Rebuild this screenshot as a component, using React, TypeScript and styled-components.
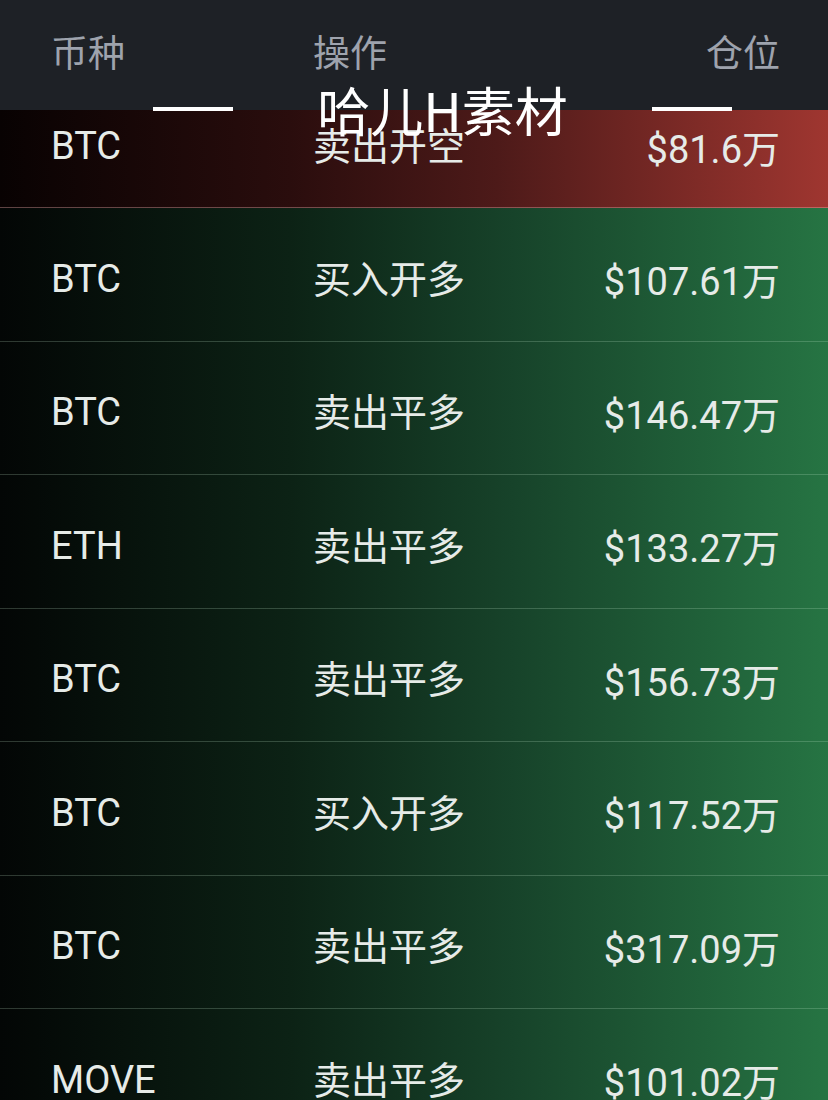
import styled, { createGlobalStyle } from "styled-components";

const GlobalStyle = createGlobalStyle`
  html, body {
    margin: 0;
    padding: 0;
    background: #050806;
  }
  body {
    font-family: Roboto, "Noto Sans CJK SC", sans-serif;
  }
`

const Page = styled.div`
  position: relative;
  width: 828px;
  height: 1100px;
  overflow: hidden;
  background: #050806;
`

const Header = styled.div`
  display: grid;
  grid-template-columns: 262px 1fr auto;
  align-items: center;
  height: 110px;
  padding: 0 48px 8px 51px;
  box-sizing: border-box;
  background: #1e2126;
  color: #9ea3ad;
  font-size: 37px;
`

const Right = styled.div`
  text-align: right;
`

// latin glyphs sit a bit high next to the CJK ones
const Latin = styled.div<{ $right?: boolean }>`
  padding-top: 3px;
  text-align: ${(p) => (p.$right ? "right" : "left")};
`

const Action = styled.div`
  margin-top: -2px;
`

const Row = styled.div<{ $tone: "red" | "green"; $clipped?: boolean }>`
  display: grid;
  grid-template-columns: 262px 1fr auto;
  align-items: center;
  height: ${(p) => (p.$clipped ? "98px" : "133.5px")};
  padding: 0 48px 0 51px;
  padding-bottom: ${(p) => (p.$clipped ? "28px" : "0")};
  padding-top: ${(p) => (p.$clipped ? "0" : "6px")};
  box-sizing: border-box;
  color: #e6ebe8;
  font-size: 38px;
  border-bottom: 1px solid ${(p) => (p.$tone === "red" ? "rgba(255,190,190,0.35)" : "rgba(200,235,210,0.22)")};
  background: ${(p) =>
    p.$tone === "red"
      ? "linear-gradient(90deg, #080202 0%, #2a0d0d 35%, #4d1a19 60%, #9f3630 100%)"
      : "linear-gradient(90deg, #030605 0%, #0c2215 35%, #17432a 62%, #267443 100%)"};
`

const Watermark = styled.div`
  position: absolute;
  top: 78px;
  left: 153px;
  width: 579px;
  display: flex;
  align-items: center;
  justify-content: space-between;
  color: #ffffff;
  font-family: "Noto Sans CJK SC", sans-serif;
  font-size: 53px;
  line-height: 62px;
`

const Dash = styled.span`
  display: block;
  width: 80px;
  height: 4px;
  margin-top: 0;
  background: #ffffff;
`

type Trade = { coin: string; action: string; size: string; tone: "red" | "green" }

const trades: Trade[] = [
  { coin: "BTC", action: "卖出开空", size: "$81.6万", tone: "red" },
  { coin: "BTC", action: "买入开多", size: "$107.61万", tone: "green" },
  { coin: "BTC", action: "卖出平多", size: "$146.47万", tone: "green" },
  { coin: "ETH", action: "卖出平多", size: "$133.27万", tone: "green" },
  { coin: "BTC", action: "卖出平多", size: "$156.73万", tone: "green" },
  { coin: "BTC", action: "买入开多", size: "$117.52万", tone: "green" },
  { coin: "BTC", action: "卖出平多", size: "$317.09万", tone: "green" },
  { coin: "MOVE", action: "卖出平多", size: "$101.02万", tone: "green" },
]

const App = () => {
  return (
    <Page>
      <GlobalStyle />
      <Header>
        <div>币种</div>
        <div>操作</div>
        <Right>仓位</Right>
      </Header>
      {trades.map((t, i) => (
        <Row key={i} $tone={t.tone} $clipped={i === 0}>
          <Latin>{t.coin}</Latin>
          <Action>{t.action}</Action>
          <Latin $right>{t.size}</Latin>
        </Row>
      ))}
      <Watermark>
        <Dash />
        <span>哈儿H素材</span>
        <Dash />
      </Watermark>
    </Page>
  )
}

export default App;
